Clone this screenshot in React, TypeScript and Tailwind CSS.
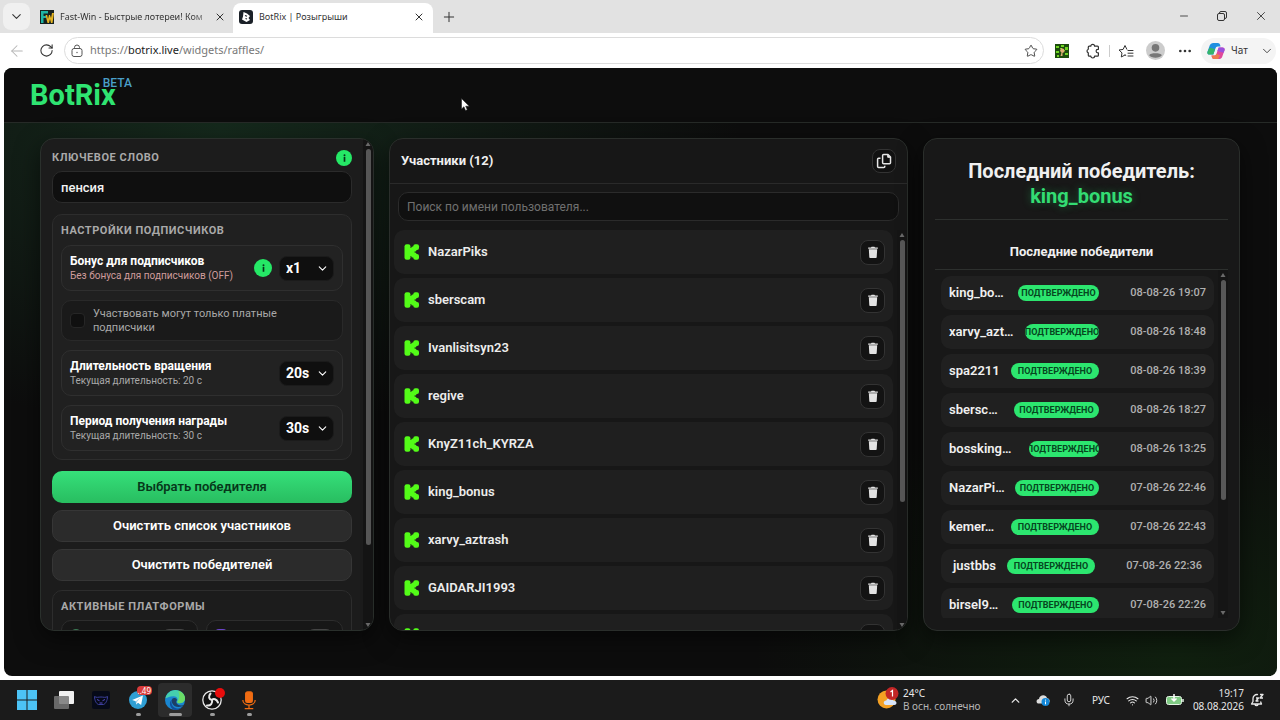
import { useState } from "react";
import type { ReactNode } from "react";
import {
  ArrowLeft,
  ChevronDown,
  ChevronUp,
  Mic,
  Minus,
  MoreHorizontal,
  Plus,
  RotateCw,
  Star,
  Volume2,
  Wifi,
  X,
} from "lucide-react";

const participants = [
  "NazarPiks",
  "sberscam",
  "Ivanlisitsyn23",
  "regive",
  "KnyZ11ch_KYRZA",
  "king_bonus",
  "xarvy_aztrash",
  "GAIDARJI1993",
  "spa2211",
];

const winners = [
  { name: "king_bo…", date: "08-08-26 19:07", badge: "w-[81px]", pad: "px-2" },
  { name: "xarvy_azt…", date: "08-08-26 18:48", badge: "w-[74px]", pad: "px-2" },
  { name: "spa2211", date: "08-08-26 18:39", badge: "w-[88px]", pad: "px-2" },
  { name: "sbersc…", date: "08-08-26 18:27", badge: "w-[85px]", pad: "px-2" },
  { name: "bossking…", date: "08-08-26 13:25", badge: "w-[70px]", pad: "px-2" },
  { name: "NazarPi…", date: "07-08-26 22:46", badge: "w-[84px]", pad: "px-2" },
  { name: "kemer…", date: "07-08-26 22:43", badge: "w-[88px]", pad: "px-2" },
  { name: "justbbs", date: "07-08-26 22:36", badge: "w-[88px]", pad: "px-3" },
  { name: "birsel9…", date: "07-08-26 22:26", badge: "w-[87px]", pad: "px-2" },
];

function KickIcon() {
  return (
    <svg viewBox="0 0 16 16" className="size-4 shrink-0" fill="#53fc18" aria-hidden="true">
      <rect x=".5" y=".3" width="6" height="15.400" rx="2.200" />
      <rect x="5" y="4" width="5.500" height="8" rx="1" />
      <rect x="7.200" y="2.400" width="5.300" height="5" rx="1.500" />
      <rect x="7.200" y="8.600" width="5.300" height="5" rx="1.500" />
      <rect x="9.300" y=".3" width="5.700" height="5.600" rx="2" />
      <rect x="9.300" y="10.100" width="5.700" height="5.600" rx="2" />
    </svg>
  );
}

function TrashIcon() {
  return (
    <svg viewBox="0 0 12 14" className="h-[13px] w-3" fill="#e2e2e2" aria-hidden="true">
      <path d="M.8 1.600h3L4.500.8h3l.7.800h3v1.300H.800z" />
      <path d="M1.500 3.500h9l-.5 8.300c0 .7-.5 1.200-1.200 1.200H3.200c-.7 0-1.200-.5-1.200-1.200z" />
    </svg>
  );
}

function CopyIcon() {
  return (
    <svg viewBox="0 0 16 16" className="size-4" fill="none" stroke="#e6e6e6" strokeWidth="1.500" strokeLinejoin="round" aria-hidden="true">
      <path d="M7.600 1.500h4.400l2.500 2.500v5.700c0 .5-.4 1-1 1H7.600c-.6 0-1-.5-1-1V2.500c0-.5.400-1 1-1z" />
      <path d="M11.700 1.700v2.600h2.600" fill="#e6e6e6" strokeWidth="1" />
      <path d="M4.500 5.200H2.600c-.6 0-1 .4-1 1v7.200c0 .6.4 1 1 1h5.200c.6 0 1-.4 1-1v-.7" />
    </svg>
  );
}

function InfoDot({ className }: { className: string }) {
  return (
    <button type="button" aria-label="Справка" className={`flex shrink-0 items-center justify-center rounded-full bg-[#25e866] ${className}`}>
      <svg viewBox="0 0 4 10" className="h-2 w-[3px]" fill="#07331a" aria-hidden="true">
        <circle cx="2" cy="1.300" r="1.300" />
        <rect x=".9" y="3.500" width="2.200" height="6.500" />
      </svg>
    </button>
  );
}

function ScrollBar({ thumb }: { thumb: string }) {
  return (
    <div className="flex w-[10px] shrink-0 flex-col items-center gap-[3px] bg-[#151515] py-[3px]" aria-hidden="true">
      <svg viewBox="0 0 6 4" className="h-1 w-[6px] shrink-0" fill="#6a6a6a"><path d="M3 0l2.500 4h-5z" /></svg>
      <div className="min-h-0 w-full flex-1 pr-[2px] pl-[3px]">
        <div className={`w-full rounded-full bg-[#585858] ${thumb}`} />
      </div>
      <svg viewBox="0 0 6 4" className="h-1 w-[6px] shrink-0" fill="#6a6a6a"><path d="M3 4l2.500-4h-5z" /></svg>
    </div>
  );
}

function Dropdown({ id, options, label }: { id: string; options: string[]; label: string }) {
  return (
    <div className="relative shrink-0">
      <select
        id={id}
        aria-label={label}
        className="h-[25px] w-[55px] appearance-none rounded-lg border border-[#1b1b1b] bg-[#0f0f0f] pl-[6px] text-sm leading-none font-bold text-white"
      >
        {options.map((o) => (
          <option key={o}>{o}</option>
        ))}
      </select>
      <ChevronDown className="pointer-events-none absolute top-[6px] right-[5px] size-[13px] text-white" />
    </div>
  );
}

function SettingRow({ title, note, noteClass, children }: { title: string; note: string; noteClass: string; children: ReactNode }) {
  return (
    <div className="flex h-[46px] items-center gap-[7px] rounded-[10px] border border-[#2f2f2f] bg-[#222] px-2">
      <div className="min-w-0 flex-1 whitespace-nowrap">
        <div className="text-xs leading-[15px] font-bold text-white">{title}</div>
        <div className={`text-[10px] leading-[14px] ${noteClass}`}>{note}</div>
      </div>
      {children}
    </div>
  );
}

function Browser() {
  return (
    <div className="font-['Noto_Sans',sans-serif] text-[#333]">
      {/* Tabs */}
      <div className="flex h-[33px] items-end bg-[#e2e2e2]">
        <button type="button" aria-label="Поиск вкладок" className="mb-[3px] ml-[3px] flex size-[27px] items-center justify-center rounded-lg bg-[#f0f0f0]">
          <ChevronDown className="size-[15px]" strokeWidth={1.7} />
        </button>
        <div className="flex h-[30px] w-[203px] items-center pr-[7px] pb-[2px] pl-[10px]">
          <svg viewBox="0 0 14 14" className="size-[14px] shrink-0" aria-hidden="true">
            <rect width="14" height="14" fill="#17211f" />
            <path d="M1 13V1h7v2.500H3.500V6H6v2H3.500v5z" fill="#1fb3a4" />
            <path d="M5.500 5l2 8h1.500l1-4 1 4h1.500L14 3h-2l-1 5-1-3H9L8 9 7.200 5z" fill="#e6b422" />
          </svg>
          <span className="ml-[6px] flex-1 overflow-hidden text-[9px] leading-4 whitespace-nowrap [mask-image:linear-gradient(to_right,#000_85%,#0004)]">
            Fast-Win - Быстрые лотереи! Ком
          </span>
          <button type="button" aria-label="Закрыть вкладку" className="ml-[2px]"><X className="size-3" strokeWidth={2} /></button>
        </div>
        <div className="flex h-[30px] w-[200px] items-center rounded-t-lg bg-white px-[6px] pb-[2px]">
          <svg viewBox="0 0 14 14" className="size-[14px] shrink-0" aria-hidden="true">
            <rect width="14" height="14" rx="3" fill="#1b2128" />
            <path d="M4.500 2l3.500 1.500L11 6 9.500 8 11 10l-3.500 2L3 9.500l1-3z" fill="#fff" />
            <path d="M6 5.500l2 .8M6.500 8.500l1.500.5" stroke="#1b2128" strokeWidth="1.200" />
          </svg>
          <span className="ml-[6px] flex-1 text-[9px] leading-4">BotRix | Розыгрыши</span>
          <button type="button" aria-label="Закрыть вкладку" className="mr-[2px]"><X className="size-3" strokeWidth={2} /></button>
        </div>
        <button type="button" aria-label="Новая вкладка" className="mb-2 ml-2"><Plus className="size-4" strokeWidth={1.5} /></button>
        <div className="mb-[10px] ml-auto flex items-center gap-[26px] pr-[12px]">
          <button type="button" aria-label="Свернуть"><Minus className="size-3" strokeWidth={1.7} /></button>
          <button type="button" aria-label="Свернуть в окно">
            <svg viewBox="0 0 12 12" className="size-3" fill="none" stroke="#333" aria-hidden="true">
              <rect x="1.500" y="3.500" width="7" height="7" rx="1.500" />
              <path d="M3.500 3.500V3A1.500 1.500 0 0 1 5 1.500h4A1.500 1.500 0 0 1 10.500 3v4A1.500 1.500 0 0 1 9 8.500h-.5" />
            </svg>
          </button>
          <button type="button" aria-label="Закрыть"><X className="size-[14px]" strokeWidth={1.5} /></button>
        </div>
      </div>
      {/* Address bar */}
      <div className="flex h-[35px] items-center bg-white pr-1 pl-2">
        <button type="button" aria-label="Назад" className="w-[31px] text-[#b5b5b5]"><ArrowLeft className="size-[18px]" strokeWidth={1.4} /></button>
        <button type="button" aria-label="Обновить" className="w-[25px]"><RotateCw className="size-[15px]" strokeWidth={1.7} /></button>
        <div className="flex h-[27px] flex-1 items-center gap-[6px] rounded-full border border-[#dcdcdc] px-[5px]">
          <svg viewBox="0 0 14 14" className="size-[14px] shrink-0" fill="none" stroke="#555" aria-hidden="true">
            <rect x="2" y="4.500" width="10" height="8" rx="2" />
            <path d="M4.500 4.500v-1a2.500 2.500 0 0 1 5 0v1" />
            <circle cx="7" cy="8.500" r=".7" fill="#555" stroke="none" />
          </svg>
          <span className="flex-1 text-[11px] text-[#777]">
            https://<span className="text-[#222]">botrix.live</span>/widgets/raffles/
          </span>
          <button type="button" aria-label="В избранное"><Star className="size-[14px]" strokeWidth={1.5} /></button>
        </div>
        <svg viewBox="0 0 14 14" className="ml-[11px] size-[14px]" aria-hidden="true">
          <rect width="14" height="14" fill="#1c4d0c" />
          <path d="M1 2h3v2H1zM6 1h3v2H6zM10 3h3v3h-3zM1 7h3v2H1zM10 9h3v2h-3zM5 4h2v1H5zM8 6h2v1H8zM2 11h2v2H2z" fill="#6fd423" />
          <path d="M6 4l3 1 .5 3-2 1v3H5.500l1-3.500L5 7z" fill="#dcae72" />
        </svg>
        <button type="button" aria-label="Расширения" className="ml-4">
          <svg viewBox="0 0 16 16" className="size-4" fill="none" stroke="#333" strokeWidth="1.200" strokeLinejoin="round" aria-hidden="true">
            <path d="M5.800 3.200a1.900 1.900 0 0 1 3.800 0H12.500c.5 0 .9.400.9.900v2.200h-.5a1.800 1.800 0 0 0 0 3.600h.5v2.300c0 .5-.4.900-.9.900H9.600a1.900 1.900 0 0 1-3.800 0H4.200c-.5 0-.9-.4-.9-.900V9.900a1.900 1.900 0 0 1 0-3.600V4.100c0-.5.400-.9.900-.9z" />
          </svg>
        </button>
        <div className="mx-[8px] h-3 w-px bg-[#ccc]" />
        <button type="button" aria-label="Избранное">
          <svg viewBox="0 0 16 16" className="size-4" fill="none" stroke="#333" strokeLinejoin="round" strokeLinecap="round" aria-hidden="true">
            <path d="M7 12l-3.700 2 .7-4.100-3-2.900 4.100-.6L7 2.500l1.800 3.700M7 12l.8.400M10 7.500h5M10 10.200h5M10 13h5" />
          </svg>
        </button>
        <svg viewBox="0 0 18 18" className="ml-3 size-[19px]" aria-hidden="true">
          <circle cx="9" cy="9" r="9" fill="#ccc" />
          <circle cx="9" cy="6.500" r="3.600" fill="#777" />
          <path d="M3 13.500c1-2.500 11-2.500 12 0-1.500 3-10.500 3-12 0z" fill="#777" />
        </svg>
        <button type="button" aria-label="Ещё" className="ml-3"><MoreHorizontal className="size-4" /></button>
        <button type="button" className="ml-2 flex h-[26px] w-[75px] items-center rounded-full bg-[#f4f4f4] px-[6px] text-[10px]">
          <svg viewBox="0 0 20 20" className="size-[18px]" aria-hidden="true">
            <path d="M7 1h5c1.500 0 2.200 1 2.600 2.300L15 5h-3c-1.500 0-2 .8-2.500 2L7 14H3c-2 0-3-1.300-2.500-3.200L3 4c.7-2 2-3 4-3z" fill="#1f8fe0" />
            <path d="M3 6L.5 11C0 12.800 1 14 3 14h4l2-6z" fill="#35b56a" />
            <path d="M13 19H8c-1.500 0-2.200-1-2.600-2.300L5 15h3c1.500 0 2-.8 2.500-2L13 6h4c2 0 3 1.300 2.500 3.200L17 16c-.7 2-2 3-4 3z" fill="#e0489a" />
            <path d="M13 6h4c2 0 3 1.300 2.500 3.200L18.500 12l-7-2z" fill="#9a50dd" />
            <path d="M5 15h3c1.500 0 2-.8 2.500-2l4 2-2 4H8c-1.500 0-2.200-1-2.600-2.300z" fill="#ee7a4d" />
          </svg>
          <span className="ml-[6px] flex-1 text-left">Чат</span>
          <ChevronDown className="-mr-1 size-[14px]" strokeWidth={1.5} />
        </button>
      </div>
    </div>
  );
}

function ControlPanel() {
  const [keyword, setKeyword] = useState("пенсия");
  return (
    <section className="flex w-[334px] shrink-0 overflow-hidden rounded-[14px] border border-[#2a302c] bg-[#1c1c1c] shadow-[0_8px_24px_#0008]">
      <div className="min-w-0 flex-1 overflow-hidden px-[11px] pt-[11px]">
        <div className="flex h-4 items-center justify-between">
          <label htmlFor="keyword" className="text-[11px] font-bold tracking-wider text-[#a9a9a9]">КЛЮЧЕВОЕ СЛОВО</label>
          <InfoDot className="size-4" />
        </div>
        <input
          id="keyword"
          value={keyword}
          onChange={(e) => setKeyword(e.target.value)}
          className="mt-[5px] block h-8 w-full rounded-[10px] border border-[#2b2b2b] bg-[#0f0f0f] px-2 text-[13px] font-medium text-[#f2f2f2]"
        />
        <div className="mt-[11px] flex flex-col gap-[9px] rounded-[10px] border border-[#2d2d2d] bg-[#202020] p-2">
          <h2 className="-mb-px h-[14px] text-[11px] leading-4 font-bold tracking-wider text-[#a9a9a9]">НАСТРОЙКИ ПОДПИСЧИКОВ</h2>
          <SettingRow title="Бонус для подписчиков" note="Без бонуса для подписчиков (OFF)" noteClass="text-[#cf9c9c]">
            <InfoDot className="size-[18px]" />
            <Dropdown id="bonus" label="Бонус для подписчиков" options={["x1", "x2", "x3"]} />
          </SettingRow>
          <label className="flex h-[41px] items-center gap-2 rounded-[10px] border border-[#292929] bg-[#1a1a1a] px-2">
            <input type="checkbox" className="size-[15px] shrink-0 appearance-none rounded-sm border border-[#262626] bg-[#101010] checked:bg-[#25e866]" />
            <span className="text-[11px] leading-[14px] text-[#a9a9a9]">Участвовать могут только платные подписчики</span>
          </label>
          <SettingRow title="Длительность вращения" note="Текущая длительность: 20 с" noteClass="text-[#a9a9a9]">
            <Dropdown id="spin" label="Длительность вращения" options={["20s", "10s", "5s"]} />
          </SettingRow>
          <SettingRow title="Период получения награды" note="Текущая длительность: 30 с" noteClass="text-[#a9a9a9]">
            <Dropdown id="claim" label="Период получения награды" options={["30s", "60s", "90s"]} />
          </SettingRow>
        </div>
        <div className="mt-[11px] flex flex-col gap-[7px] text-[13px] font-semibold text-white">
          <button type="button" className="h-8 rounded-[10px] bg-linear-to-b from-[#36e07a] to-[#28bd60] text-[#06371a]">Выбрать победителя</button>
          <button type="button" className="h-8 rounded-[10px] border border-[#363636] bg-[#2b2b2b]">Очистить список участников</button>
          <button type="button" className="h-8 rounded-[10px] border border-[#363636] bg-[#2b2b2b]">Очистить победителей</button>
        </div>
        <div className="mt-[9px] rounded-[10px] border border-[#2d2d2d] bg-[#1c1c1c] p-2">
          <h2 className="h-[14px] text-[11px] leading-4 font-bold tracking-wider text-[#a9a9a9]">АКТИВНЫЕ ПЛАТФОРМЫ</h2>
          <div className="mt-[7px] grid grid-cols-2 gap-2">
            <label className="flex h-9 items-start justify-between rounded-[10px] border border-[#2d2d2d] bg-[#171717] px-2 pt-2">
              <span className="size-3 rounded-full bg-[#3c7a55]" />
              <input type="checkbox" aria-label="Kick" defaultChecked className="h-4 w-7 appearance-none rounded-full border border-[#444] bg-[#222]" />
            </label>
            <label className="flex h-9 items-start justify-between rounded-[10px] border border-[#2d2d2d] bg-[#171717] px-2 pt-2">
              <span className="size-3 rounded-sm bg-[#6b45c9]" />
              <input type="checkbox" aria-label="Twitch" className="h-4 w-7 appearance-none rounded-full border border-[#444] bg-[#222]" />
            </label>
          </div>
        </div>
      </div>
      <ScrollBar thumb="h-[84%]" />
    </section>
  );
}

function Participants() {
  const [query, setQuery] = useState("");
  const visible = participants.filter((p) => p.toLowerCase().includes(query.toLowerCase()));
  return (
    <section className="flex min-w-0 flex-1 flex-col overflow-hidden rounded-[14px] border border-[#2a2e2b] bg-[#171717] shadow-[0_8px_24px_#0008]">
      <div className="flex h-[45px] shrink-0 items-center justify-between border-b border-[#2a2a2a] px-[11px]">
        <h2 className="text-[13px] font-bold text-[#f0f0f0]">Участники (12)</h2>
        <button type="button" aria-label="Скопировать список" className="flex size-6 items-center justify-center rounded-lg border border-[#333] bg-[#111]">
          <CopyIcon />
        </button>
      </div>
      <div className="shrink-0 px-2 pt-2">
        <input
          type="search"
          value={query}
          onChange={(e) => setQuery(e.target.value)}
          placeholder="Поиск по имени пользователя..."
          aria-label="Поиск по имени пользователя"
          className="block h-[29px] w-full rounded-[10px] border border-[#2b2b2b] bg-[#101010] px-2 text-xs text-white placeholder:text-[#707070]"
        />
      </div>
      <div className="mt-[9px] flex min-h-0 flex-1">
        <ul className="flex min-w-0 flex-1 flex-col gap-1 overflow-hidden px-1">
          {visible.map((name) => (
            <li key={name} className="flex h-11 shrink-0 items-center gap-2 rounded-[10px] bg-[#1f1f1f] pr-2 pl-[10px]">
              <KickIcon />
              <span className="flex-1 text-[13px] font-semibold text-[#ececec]">{name}</span>
              <button type="button" aria-label={`Удалить ${name}`} className="flex size-[25px] items-center justify-center rounded-lg border border-[#333] bg-[#131313]">
                <TrashIcon />
              </button>
            </li>
          ))}
        </ul>
        <ScrollBar thumb="h-[69%]" />
      </div>
    </section>
  );
}

function Winners() {
  return (
    <section className="flex w-[317px] shrink-0 flex-col overflow-hidden rounded-[14px] border border-[#2a2e2b] bg-[#181818] pr-[11px] pb-3 pl-[11px] text-center shadow-[0_8px_24px_#0008]">
      <div className="h-[81px] shrink-0 border-b border-[#2d302e] pt-5 text-xl leading-[25px] font-bold text-[#f0f0f0]">
        <h2>Последний победитель:</h2>
        <p className="text-[#33dc73] [text-shadow:0_0_8px_#22c55e66]">king_bonus</p>
      </div>
      <h3 className="flex h-[50px] shrink-0 items-end justify-center border-b border-[#2d302e] pb-2 text-[13px] font-bold text-[#f0f0f0]">
        Последние победители
      </h3>
      <div className="flex min-h-0 flex-1">
        <ul className="flex min-w-0 flex-1 flex-col gap-[5px] overflow-hidden pt-[6px] pr-1 pl-[6px]">
          {winners.map((w) => (
            <li key={w.name} className={`flex h-[34px] shrink-0 items-center justify-between rounded-[10px] bg-[#202020] ${w.pad}`}>
              <span className="text-[13px] font-semibold whitespace-nowrap text-[#f0f0f0]">{w.name}</span>
              <div className="flex items-center gap-[31px]">
                <span className={`flex h-4 items-center justify-center overflow-hidden rounded-full bg-[#2ce66f] text-[9px] leading-4 font-bold whitespace-nowrap text-[#06471f] ${w.badge}`}>
                  ПОДТВЕРЖДЕНО
                </span>
                <time className="w-[76px] text-right text-[11px] font-medium whitespace-nowrap text-[#b0b0b0]">{w.date}</time>
              </div>
            </li>
          ))}
        </ul>
        <ScrollBar thumb="h-[67%]" />
      </div>
    </section>
  );
}

function TaskItem({ label, mark, active, children }: { label: string; mark?: string; active?: boolean; children: ReactNode }) {
  return (
    <button type="button" aria-label={label} className={`relative flex size-[34px] items-center justify-center rounded ${active ? "bg-[#2c2c2c]" : ""}`}>
      {children}
      {mark && <span className={`absolute bottom-px h-[3px] rounded-full bg-[#9c9c9c] ${mark}`} />}
    </button>
  );
}

function Taskbar() {
  return (
    <footer className="flex h-10 shrink-0 items-center bg-[#1b1b1b] pr-4 pl-[10px] font-['Noto_Sans',sans-serif] text-[10px] text-[#e8e8e8]">
      <div className="flex gap-[3px]">
        <TaskItem label="Пуск">
          <svg viewBox="0 0 20 20" className="size-5" fill="#4cc3f5" aria-hidden="true">
            <path d="M0 0h9.500v9.500H0zM10.500 0H20v9.500h-9.500zM0 10.500h9.500V20H0zM10.500 10.500H20V20h-9.500z" />
          </svg>
        </TaskItem>
        <TaskItem label="Представление задач">
          <svg viewBox="0 0 20 20" className="size-5" aria-hidden="true">
            <rect x="5" y="1" width="15" height="13" rx="1" fill="#f1f1f1" />
            <rect y="6" width="15" height="13" rx="1" fill="#777" fillOpacity=".85" />
          </svg>
        </TaskItem>
        <TaskItem label="Игровой клиент">
          <svg viewBox="0 0 18 18" className="size-[18px]" fill="none" aria-hidden="true">
            <rect width="18" height="18" rx="2" fill="#060a18" />
            <path d="M2.500 5.500c2 1.500 4 .5 6.500.5s4.500 1 6.500-.5c0 4-2 7.500-4 8H6.500c-2-.5-4-4-4-8z" stroke="#3b3f9c" />
            <path d="M5 8.500l2.500 1.200M13 8.500l-2.500 1.200M7.500 12h3" stroke="#554bc4" />
          </svg>
        </TaskItem>
        <TaskItem label="Telegram" mark="w-[5px]">
          <svg viewBox="0 0 20 20" className="size-[18px]" aria-hidden="true">
            <circle cx="10" cy="10" r="10" fill="#2f9fd4" />
            <path d="M3.500 10L15.500 5l-2 10.500-3.500-2.500-2 2-.5-3.700z" fill="#fff" />
            <path d="M7.500 11.300L13 7l-4 5-1 3z" fill="#a9d5ec" />
          </svg>
          <span className="absolute top-[3px] right-[3px] rounded-sm bg-[#d83b3b] px-px text-[8px] leading-[9px] text-white">..49</span>
        </TaskItem>
        <TaskItem label="Microsoft Edge" mark="w-[13px]" active>
          <svg viewBox="0 0 20 20" className="size-5" aria-hidden="true">
            <circle cx="10" cy="10" r="10" fill="#1a86d0" />
            <path d="M.3 8.500C1.500 3.500 5.500 0 10.500 0 16 0 20 4 20 8.300c0 3-2.300 4.900-5 4.900-2.200 0-3.200-.9-2.700-1.800.9-1.500.4-5.200-3.800-5.200C4.500 6.200 1.500 8 .3 8.500z" fill="#45cfae" />
            <path d="M13 1c4 .8 7 4 7 7.300 0 3-2.300 4.900-5 4.900-2.200 0-3.200-.9-2.700-1.800C14.500 9.500 15 4.500 13 1z" fill="#6bdd66" />
            <path d="M7 9.500C5.500 12.500 7 18 12.500 18.500c2.500.2 4.800-1.200 6-3-2 3.500-5.500 4.900-9.500 4.400C4.500 18 3.500 12 7 9.500z" fill="#124f99" />
            <path d="M7.500 8.500c-2 3.500.5 8.500 6 8.500 2.200 0 4.300-.8 5.300-2-2.300.9-6.800.6-7.500-2.500-.4-1.600 1.200-2 .4-3.400-.8-1.300-3.200-1.600-4.200-.6z" fill="#1c3f66" />
          </svg>
        </TaskItem>
        <TaskItem label="OBS Studio" mark="w-[5px]">
          <svg viewBox="0 0 20 20" className="size-5" fill="none" stroke="#e9e9e9" strokeLinecap="round" aria-hidden="true">
            <circle cx="10" cy="10" r="9.200" fill="#111" strokeWidth="1.300" />
            <path d="M8.500 3.500c-2.500 3-1.500 6 1.500 6.500M16 12.500c-1.500-3.500-4.500-4.300-6-2.500M5 15.500c3.800.5 5.800-2.500 5-5.500" strokeWidth="2" />
          </svg>
          <span className="absolute top-[5px] right-[4px] size-[10px] rounded-full bg-[#e80c0c]" />
        </TaskItem>
        <TaskItem label="Запись голоса" mark="w-[5px]">
          <svg viewBox="0 0 16 20" className="h-[19px] w-4" fill="none" stroke="#f06c13" strokeWidth="1.300" aria-hidden="true">
            <rect x="4.500" y="1" width="7" height="11" rx="2" fill="#f06c13" />
            <path d="M1.500 9.500c0 7 13 7 13 0M8 15v3.500M3.500 18.500h9" />
          </svg>
        </TaskItem>
      </div>
      <div className="ml-auto flex items-center">
        <div className="flex w-[132px] items-center gap-1">
          <svg viewBox="0 0 22 22" className="mb-1 size-[22px] shrink-0" aria-hidden="true">
            <circle cx="9.500" cy="12.500" r="9" fill="#f4a023" />
            <path d="M9 18c-3-.4-3-4.500.3-4.500 1-3.500 6-3.500 7 0 4 0 4.200 4.500 1 4.500z" fill="#d8e5fa" />
            <circle cx="15" cy="6.500" r="6.500" fill="#c32626" />
            <path d="M13.500 5L15.500 3.500v6" fill="none" stroke="#fff" strokeWidth="1.200" />
          </svg>
          <div className="leading-[13px] whitespace-nowrap">
            <div>24°C</div>
            <div className="text-[#b5b5b5]">В осн. солнечно</div>
          </div>
        </div>
        <ChevronUp className="size-[13px]" strokeWidth={2.5} />
        <svg viewBox="0 0 14 12" className="ml-[14px] h-3 w-[14px]" aria-hidden="true">
          <path d="M3 9.500C-.5 9.500 0 5 3 5c.5-4.500 7-5 8-1 3.500.5 3.500 5.500 0 5.500z" fill="#dcdcdc" />
          <circle cx="9.500" cy="8" r="4" fill="#1387d8" />
          <path d="M9.500 7.500v2.800M9.500 5.600v1" stroke="#fff" />
        </svg>
        <Mic className="ml-3 size-[14px]" strokeWidth={1.5} />
        <span className="ml-4">РУС</span>
        <Wifi className="ml-4 size-[13px]" strokeWidth={2} />
        <Volume2 className="ml-[6px] size-[13px]" strokeWidth={1.700} />
        <svg viewBox="0 0 18 12" className="ml-2 h-3 w-[18px]" aria-hidden="true">
          <rect x=".5" y="2.500" width="15" height="8" rx="2" fill="#7fca83" stroke="#e4f4e4" />
          <path d="M17 5v3" stroke="#e4f4e4" strokeWidth="1.500" />
          <path d="M8 0v6M5.500 4.500L8 7l2.500-2.500" stroke="#fff" strokeWidth="1.500" fill="none" />
        </svg>
        <div className="w-[60px] text-right leading-[13px]">
          <div>19:17</div>
          <div>08.08.2026</div>
        </div>
        <svg viewBox="0 0 14 14" className="ml-[6px] size-[14px]" fill="none" stroke="#e8e8e8" strokeWidth="1.300" strokeLinejoin="round" aria-hidden="true">
          <path d="M8 1.600C5 1 3 3 3 5.500v3L1.500 11h10L10.500 8.500M5 11.500c.4 1.500 2.600 1.500 3 0M6 5h2.500L6 8h2.500M10 1.500h3L10 5h3" />
        </svg>
      </div>
    </footer>
  );
}

export default function App() {
  return (
    <div className="flex h-screen min-h-[500px] flex-col overflow-hidden bg-white">
      <Browser />
      <div className="relative mr-[3px] mb-1 ml-1 flex min-h-0 flex-1 flex-col overflow-hidden rounded-lg bg-[#0d0d0d] bg-[radial-gradient(ellipse_520px_300px_at_17%_10%,#15291c,transparent),radial-gradient(ellipse_420px_260px_at_92%_96%,#10200f,transparent)] font-[Roboto,sans-serif]">
        <header className="flex h-[55px] shrink-0 items-center border-b border-[#262a27] bg-[#0d0d0d] pl-[26px]">
          <a href="#" className="flex items-start">
            <span className="text-[29px] leading-8 font-bold text-[#2fe472]">BotRix</span>
            <span className="-mt-[3px] -ml-[13px] text-xs leading-[14px] font-medium text-[#4a9fc9]">BETA</span>
          </a>
        </header>
        <main className="flex min-h-0 flex-1 gap-[15px] pt-[15px] pr-[37px] pb-[45px] pl-9">
          <ControlPanel />
          <Participants />
          <Winners />
        </main>
        {/* Pointer */}
        <svg viewBox="0 0 9 13" className="pointer-events-none absolute top-[30px] left-[457px] h-[13px] w-[9px]" aria-hidden="true">
          <path d="M.5.500v10.500l2.400-2.200 1.600 3.700 1.800-.8-1.600-3.500h3.600z" fill="#fff" stroke="#222" strokeWidth=".6" />
        </svg>
      </div>
      <Taskbar />
    </div>
  );
}
